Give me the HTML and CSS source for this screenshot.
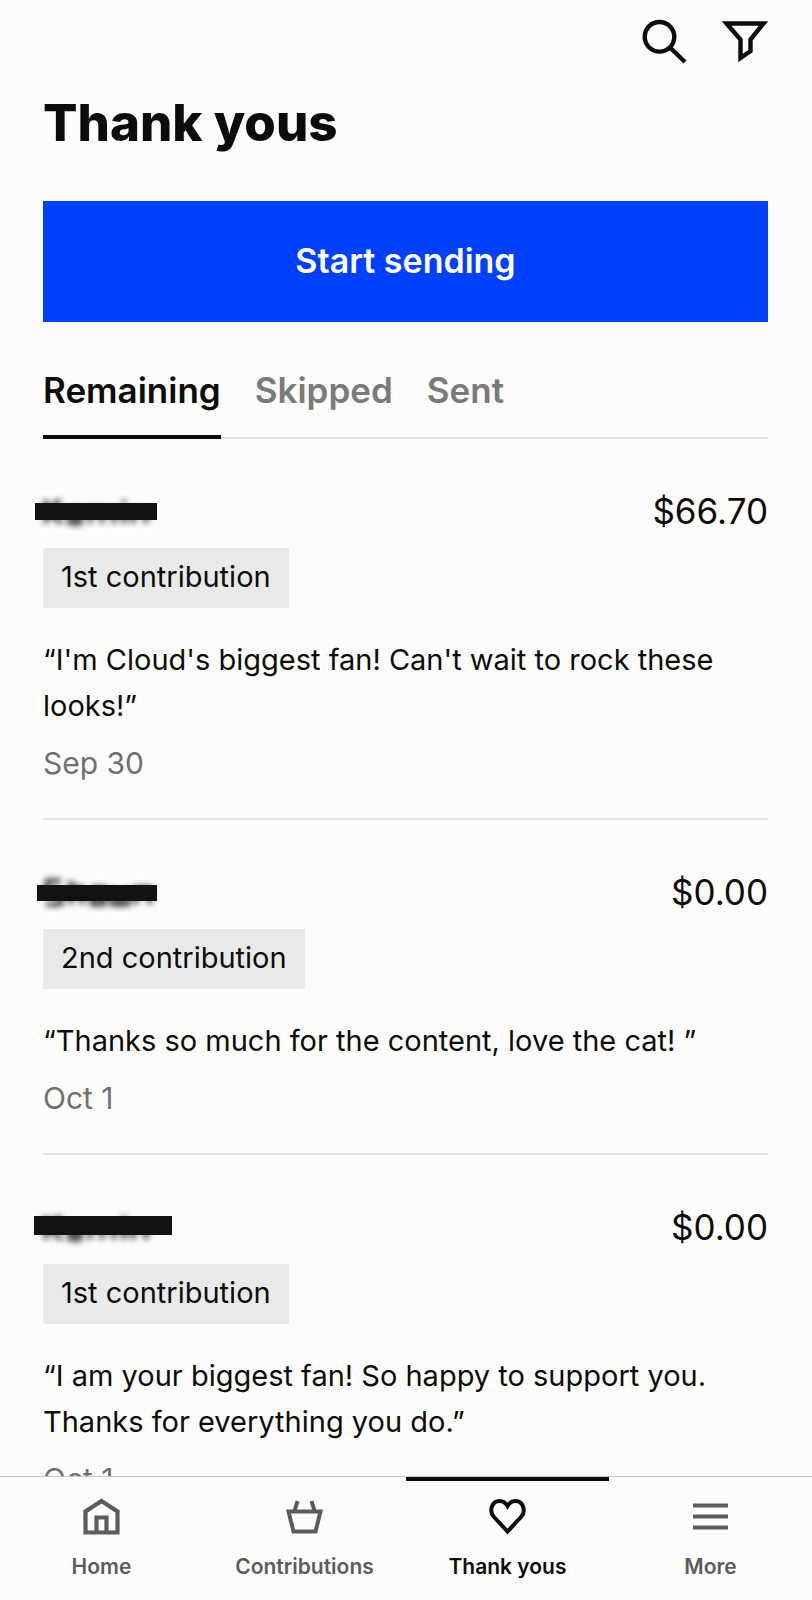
FILE: index.html
```html
<!DOCTYPE html>
<html lang="en">
<head>
    <meta charset="UTF-8">
    <meta name="viewport" content="width=device-width, initial-scale=1.0">
    <title>Thank yous</title>
    <link rel="stylesheet" href="styles.css">
</head>
<body>

<main class="content">
    <div class="toolbar">
        <button class="icon-button" type="button" aria-label="Search">
            <svg width="48" height="48" viewBox="0 0 48 48" fill="none" stroke="currentColor" stroke-width="4.400">
                <circle cx="19.500" cy="18.800" r="14.800"/>
                <path d="M30 29.500L45 44"/>
            </svg>
        </button>
        <button class="icon-button" type="button" aria-label="Filter">
            <svg width="48" height="48" viewBox="0 0 48 48" fill="none" stroke="currentColor" stroke-width="4.400">
                <path d="M6.500 5.500H43.500L30.500 21.500V33L20.500 40V21.500Z"/>
            </svg>
        </button>
    </div>

    <h1>Thank yous</h1>

    <button class="start" type="button">Start sending</button>

    <div class="tabs" role="tablist">
        <button class="tab active" type="button" role="tab" aria-selected="true">Remaining</button>
        <button class="tab" type="button" role="tab" aria-selected="false">Skipped</button>
        <button class="tab" type="button" role="tab" aria-selected="false">Sent</button>
    </div>

    <article class="item">
        <div class="item-top">
            <svg class="hidden-name" width="138" height="46" viewBox="0 0 138 46" role="img" aria-label="Hidden name">
                <g class="smudge">
                    <path d="M12 12V35M26 12L14 24L28 35M36 21H46V35H36V28H46M56 35V21H68V35M68 22H80V35M90 12V16M90 22V35M99 35V22H112V35"/>
                </g>
                <rect x="1" y="15" width="122" height="17"/>
            </svg>
            <span class="amount">$66.70</span>
        </div>
        <span class="tag">1st contribution</span>
        <p class="message">“I'm Cloud's biggest fan! Can't wait to rock these looks!”</p>
        <time class="date">Sep 30</time>
    </article>

    <article class="item">
        <div class="item-top">
            <svg class="hidden-name" width="138" height="46" viewBox="0 0 138 46" role="img" aria-label="Hidden name">
                <g class="smudge">
                    <path d="M27 12H13V23H27V35H12M37 12V35M37 19H48V35M58 19H70V35H58V28H70M78 19V35H94V19M86 22V35M102 35V19H116V35"/>
                </g>
                <rect x="3" y="16" width="120" height="16"/>
            </svg>
            <span class="amount">$0.00</span>
        </div>
        <span class="tag">2nd contribution</span>
        <p class="message">“Thanks so much for the content, love the cat! ”</p>
        <time class="date">Oct 1</time>
    </article>

    <article class="item">
        <div class="item-top">
            <svg class="hidden-name" width="138" height="46" viewBox="0 0 138 46" role="img" aria-label="Hidden name">
                <g class="smudge">
                    <path d="M12 12V35M26 12L14 24L28 35M36 21H46V35H36V28H46M56 35V21H68V35M68 22H80V35M90 12V16M90 22V35M99 35V22H112V35"/>
                </g>
                <rect x="0" y="12" width="138" height="19"/>
            </svg>
            <span class="amount">$0.00</span>
        </div>
        <span class="tag">1st contribution</span>
        <p class="message">“I am your biggest fan! So happy to support you. Thanks for everything you do.”</p>
        <time class="date">Oct 1</time>
    </article>
</main>

<nav class="bottom-nav">
    <a class="nav-link" href="#home">
        <svg width="40" height="40" viewBox="0 0 40 40" fill="none" stroke="currentColor" stroke-width="4.200">
            <path d="M3.500 35.500V14.500L19.500 4L35.500 14.500V35.500ZM14.500 35V20.500H24.500V35"/>
        </svg>
        Home
    </a>
    <a class="nav-link" href="#contributions">
        <svg width="40" height="40" viewBox="0 0 40 40" fill="none" stroke="currentColor" stroke-width="4">
            <path d="M3.500 14.500H35.500L30.500 34.500H8.500ZM9.500 14L12.500 4M29.500 14L26.500 4"/>
        </svg>
        Contributions
    </a>
    <a class="nav-link active" href="#thank-yous">
        <svg width="40" height="40" viewBox="0 0 40 40" fill="none" stroke="currentColor" stroke-width="4">
            <path d="M19.500 34.500L6 20C0.500 14 4 4 11.500 4C15.500 4 17.500 5.500 19.500 9C21.500 5.500 23.500 4 27.500 4C35 4 38.500 14 33 20Z"/>
        </svg>
        Thank yous
    </a>
    <a class="nav-link" href="#more">
        <svg width="40" height="40" viewBox="0 0 40 40" fill="none" stroke="currentColor" stroke-width="4.200">
            <path d="M2 8.500H37M2 19.500H37M2 30.500H37"/>
        </svg>
        More
    </a>
</nav>

</body>
</html>
```
FILE: styles.css
```css
* {
    box-sizing: border-box;
}

body {
    margin: 0;
    height: 100vh;
    display: flex;
    flex-direction: column;
    background-color: #fdfcfa;
    color: #0c0c0a;
    font-family: Inter, "Liberation Sans", sans-serif;
}

button {
    padding: 0;
    border: none;
    background: none;
    color: inherit;
    font-family: inherit;
    cursor: pointer;
}

svg {
    display: block;
}

.content {
    flex: 1;
    min-height: 0;
    padding: 18px 44px 0 43px;
    overflow-y: auto;
    scrollbar-width: none;
}

.toolbar {
    display: flex;
    justify-content: flex-end;
    gap: 32px;
}

h1 {
    margin: 25px 0 46px;
    font-size: 51px;
    line-height: 64px;
    font-weight: 800;
}

.start {
    display: block;
    width: 100%;
    height: 121px;
    padding-bottom: 2px;
    background-color: #0040ff;
    color: #fff;
    font-size: 34px;
    font-weight: 600;
}

.tabs {
    display: flex;
    gap: 34px;
    margin-top: 44px;
    box-shadow: inset 0 -2px #e4e4e2;
}

.tab {
    height: 73px;
    padding-bottom: 21px;
    border-bottom: 4px solid transparent;
    color: #7a7a78;
    font-size: 35px;
    font-weight: 600;
}

.tab.active {
    border-color: #0c0c0a;
    color: #0c0c0a;
}

.item {
    padding: 49px 0 32px;
    border-bottom: 2px solid #e4e4e2;
}

.item-top {
    display: flex;
    justify-content: space-between;
    margin-bottom: 14px;
}

/* the bar sticks out a little to the left of the text column */
.hidden-name {
    margin-left: -9px;
    fill: #12120f;
}

.smudge {
    fill: none;
    stroke: #12120f;
    stroke-width: 4;
    filter: blur(3px);
}

.amount {
    font-size: 35px;
    line-height: 46px;
}

.tag {
    display: inline-block;
    padding: 0 18px 2px;
    background-color: #e9e9e9;
    font-size: 29px;
    line-height: 58px;
}

.message {
    margin: 29px 0 11px;
    font-size: 29px;
    line-height: 46px;
}

.date {
    display: block;
    color: #70706e;
    font-size: 30px;
    line-height: 46px;
}

.bottom-nav {
    display: flex;
    height: 124px;
    border-top: 1px solid #c8c8c6;
}

.nav-link {
    flex: 1;
    display: flex;
    flex-direction: column;
    align-items: center;
    gap: 16px;
    padding-top: 16px;
    border-top: 4px solid transparent;
    color: #5c5c58;
    font-size: 21px;
    line-height: 28px;
    font-weight: 600;
    text-decoration: none;
}

.nav-link.active {
    border-color: #0c0c0a;
    color: #0c0c0a;
}
```
